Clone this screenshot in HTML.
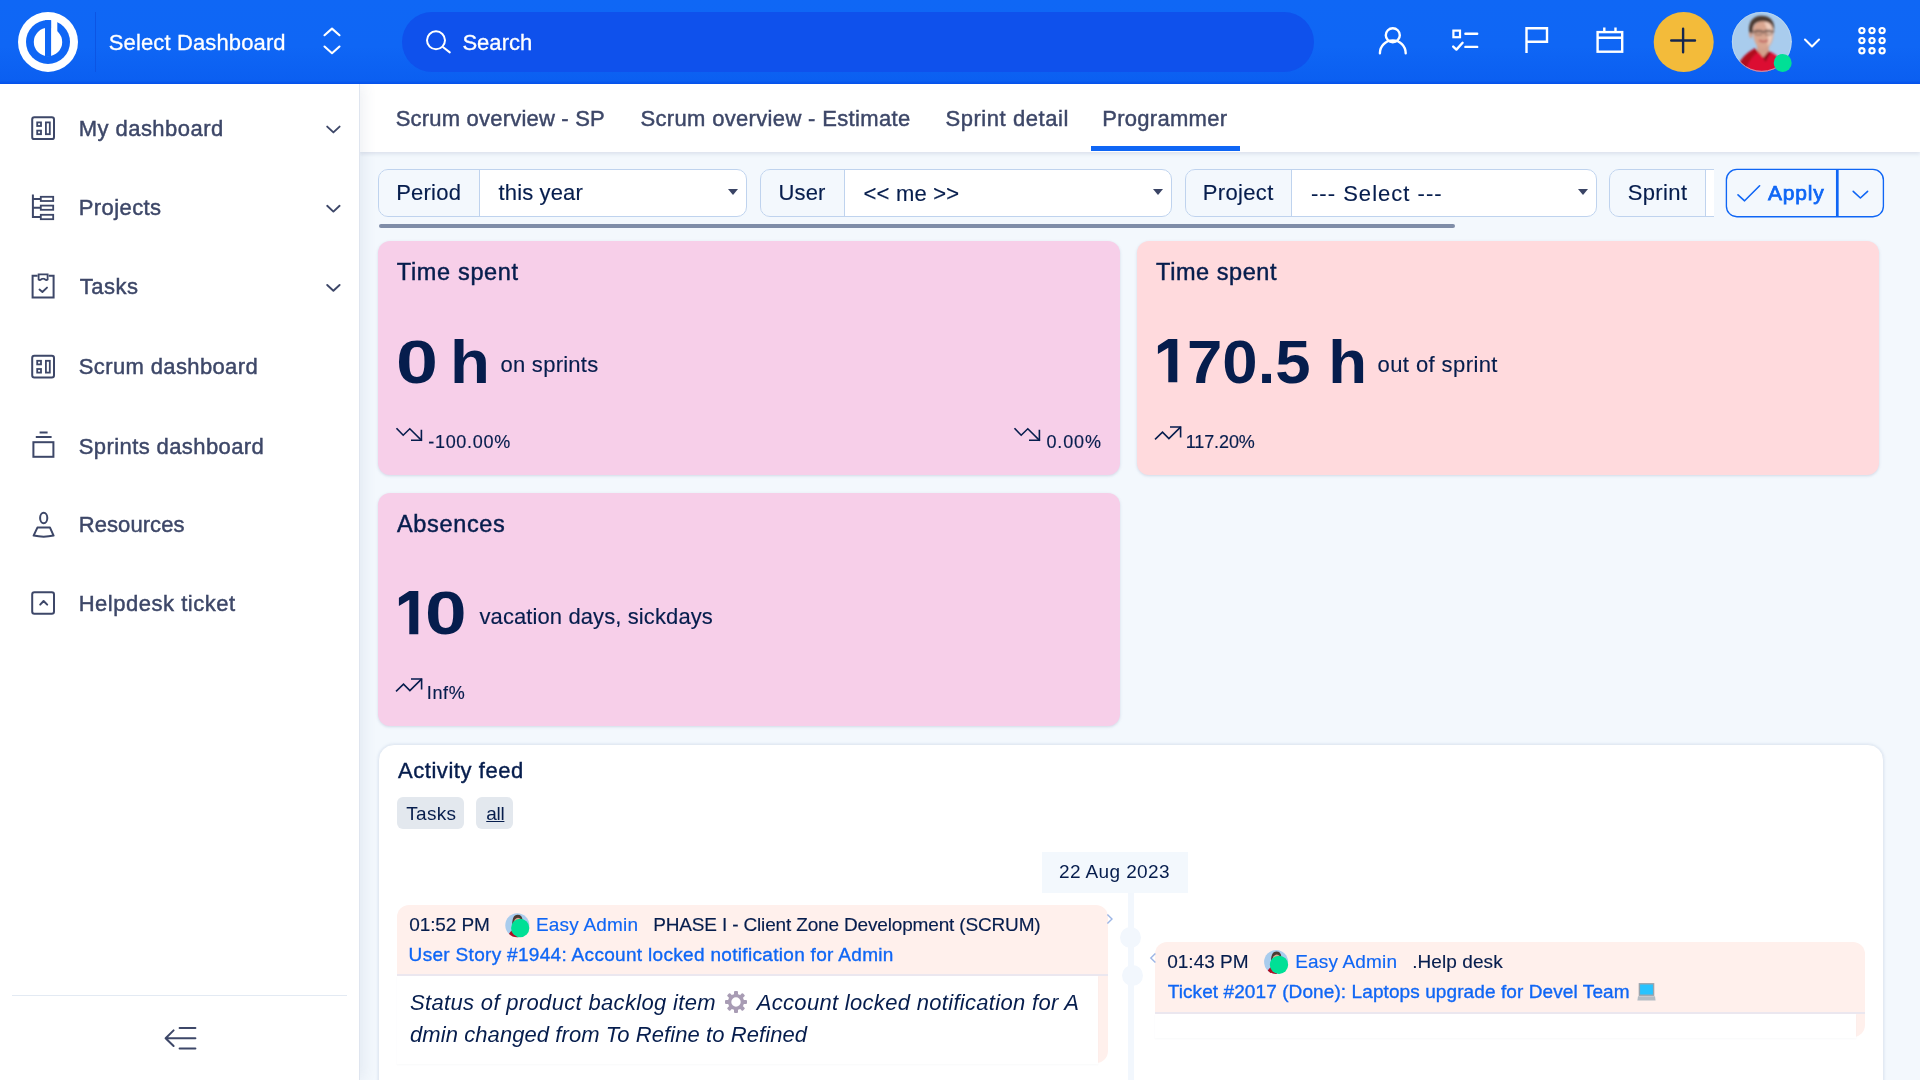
<!DOCTYPE html>
<html lang="en">
<head>
<meta charset="utf-8">
<title>Programmer - Dashboard</title>
<style>
*{box-sizing:border-box;margin:0;padding:0}
html,body{width:1920px;height:1080px;overflow:hidden}
body{position:relative;background:#f3f8fd;font-family:"Liberation Sans",sans-serif;color:#061d4d;}
.abs{position:absolute}
.t{position:absolute;white-space:nowrap;line-height:1;transform-origin:0 0}
svg{position:absolute;overflow:visible}
/* header */
#hdr{left:0;top:0;width:1920px;height:84px;background:linear-gradient(#0f67f5 0,#0f66f5 55%,#0b5ff1 96%,#0450ea 100%)}
#hdr .sep{left:95px;top:12px;width:1px;height:60px;background:#0c55e4}
#search{left:402px;top:12px;width:912px;height:60px;border-radius:30px;background:#0f51ec}
.hw{color:#fff;font-size:22px;-webkit-text-stroke:.3px #fff}
/* sidebar */
#side{left:0;top:84px;width:360px;height:996px;background:#fff;border-right:1px solid #dfe5ef;box-shadow:3px 0 14px rgba(60,80,120,.09)}
.mi{color:#3d4768;font-size:22px;font-weight:400;-webkit-text-stroke:.45px #3d4768}
/* tabs */
#tabs{left:360px;top:84px;width:1560px;height:68px;background:#fff;box-shadow:0 2px 4px rgba(60,80,120,.13)}
.tab{color:#3d4768;font-size:22px;-webkit-text-stroke:.45px #3d4768}
/* filters */
.fg{top:169px;height:48px;border:1px solid #bfd3ee;border-radius:10px;background:#fff;overflow:hidden}
.fl{position:absolute;left:-1px;top:-1px;height:48px;background:#f3f8fd;border:1px solid #bfd3ee;border-radius:10px 0 0 10px}
.ft{font-size:22px;color:#061d4d;-webkit-text-stroke:.15px #061d4d}
.car{width:0;height:0;border-left:5.75px solid transparent;border-right:5.75px solid transparent;border-top:6.5px solid #3a4465}
/* cards */
.card{border-radius:12px;box-shadow:0 1px 3px rgba(90,110,150,.22)}
.ct{font-size:23.5px;color:#061d4d;-webkit-text-stroke:.45px #061d4d}
.big{font-size:61px;font-weight:700;color:#061d4d}
.sub{font-size:22px;color:#061d4d;-webkit-text-stroke:.15px #061d4d}
.pc{font-size:18px;color:#061d4d;-webkit-text-stroke:.15px #061d4d}
/* feed */
.tag{height:32px;border-radius:6px;background:#e3e8ee}
.fd{font-size:19px;color:#061d4d;-webkit-text-stroke:.15px currentColor}
.lk{color:#0f66f5}
.b{-webkit-text-stroke:.35px #0f66f5}
.it{font-size:22px;font-style:italic;color:#061d4d}
</style>
</head>
<body>
<div id="wrap" style="position:absolute;left:0;top:0;width:1920px;height:1080px;overflow:hidden;will-change:transform">
<!-- MAIN CONTENT PLACEHOLDER -->
<div id="main">
<!-- FILTERS -->
<div class="abs fg" style="left:378px;width:369px"><div class="fl" style="width:102px"></div></div>
<div class="abs fg" style="left:760px;width:412px"><div class="fl" style="width:85px"></div></div>
<div class="abs fg" style="left:1185px;width:412px"><div class="fl" style="width:107px"></div></div>
<div class="abs fg" style="left:1609px;width:130px;clip-path:inset(0 25px 0 0)"><div class="fl" style="width:97px"></div></div>
<div class="t ft" style="left:396.14px;top:182.30px;letter-spacing:0.252px">Period</div>
<div class="t ft" style="left:498.62px;top:182.30px;letter-spacing:0.125px">this year</div>
<div class="t ft" style="left:778.47px;top:182.30px;letter-spacing:0.151px">User</div>
<div class="t ft" style="left:863.54px;top:182.61px;letter-spacing:0.196px">&lt;&lt; me &gt;&gt;</div>
<div class="t ft" style="left:1202.73px;top:182.30px;letter-spacing:0.344px">Project</div>
<div class="t ft" style="left:1311.00px;top:182.61px;letter-spacing:1.021px">--- Select ---</div>
<div class="t ft" style="left:1627.65px;top:182.30px;letter-spacing:0.390px">Sprint</div>
<div class="abs car" style="left:728px;top:189px"></div>
<div class="abs car" style="left:1152.6px;top:189px"></div>
<div class="abs car" style="left:1577.6px;top:189px"></div>
<svg width="160" height="50" viewBox="1725 168 160 50" style="left:1725px;top:168px" fill="none" stroke="#0f66f5" stroke-width="1.6" stroke-linecap="round" stroke-linejoin="round">
  <rect x="1726.4" y="169.4" width="157" height="47.3" rx="10.5" stroke-width="1.35" fill="#f3f8fd"/>
  <path d="M1837.3 169.4 V216.7" stroke-width="2.7" stroke-linecap="butt"/>
  <path d="M1738 194.8 L1744.6 200.8 L1759.6 185.8"/>
  <path d="M1853.2 191.3 L1860.4 198 L1867.6 191.3"/>
</svg>
<div class="t" style="left:1767.96px;top:182.21px;font-size:21px;font-weight:400;-webkit-text-stroke:.75px #0f66f5;color:#0f66f5;letter-spacing:0.805px">Apply</div>
<div class="abs" style="left:379px;top:224px;width:1076px;height:4px;border-radius:2px;background:#7f8da8"></div>

<!-- CARDS -->
<div class="abs card" style="left:378px;top:241px;width:742px;height:234px;background:#f7cfe9"></div>
<div class="abs card" style="left:1137px;top:241px;width:742px;height:234px;background:#ffdadd"></div>
<div class="abs card" style="left:378px;top:493px;width:742px;height:233px;background:#f7cfe9"></div>
<div class="t ct" style="left:396.86px;top:261.30px;letter-spacing:0.651px">Time spent</div>
<div class="t ct" style="left:1156.12px;top:261.30px;letter-spacing:0.548px">Time spent</div>
<div class="t ct" style="left:396.88px;top:513.30px;letter-spacing:0.679px">Absences</div>
<div class="t big" style="left:395.81px;top:331.61px;transform:scaleX(1.2367)">0</div>
<div class="t big" style="left:449.63px;top:331.61px;transform:scaleX(1.0716)">h</div>
<div class="t big" style="left:1186.71px;top:331.61px;transform:scaleX(1.0411)">70.5 h</div>
<div class="t big" style="left:424.81px;top:583.41px;transform:scaleX(1.2261)">0</div>
<div class="t sub" style="left:500.51px;top:354.21px;letter-spacing:0.263px">on sprints</div>
<div class="t sub" style="left:1377.55px;top:354.00px;letter-spacing:0.415px">out of sprint</div>
<div class="t sub" style="left:479.45px;top:606.00px;letter-spacing:0.104px">vacation days, sickdays</div>
<div class="t pc" style="left:428.16px;top:432.50px;letter-spacing:0.733px">-100.00%</div>
<div class="t pc" style="left:1046.41px;top:432.50px;letter-spacing:0.893px">0.00%</div>
<div class="t pc" style="left:1185.78px;top:432.50px;letter-spacing:-0.114px">117.20%</div>
<div class="t pc" style="left:426.70px;top:684.21px;letter-spacing:0.701px">Inf%</div>
<svg width="1920" height="300" viewBox="0 420 1920 300" style="left:0;top:420px" fill="none" stroke="#061d4d" stroke-width="1.6" stroke-linecap="square" stroke-linejoin="miter">
  <g id="tdn"><path d="M397 428.8 L403.2 435.2 L409.8 428.8 L421.2 440"/><path d="M411.8 440.2 H421.4 V430.6"/></g>
  <use href="#tdn" x="618"/>
  <g id="tup"><path d="M1155.6 438.8 L1162.5 432.2 L1168.9 438.6 L1180.2 427.4"/><path d="M1170.8 427 H1180.6 V436.8"/></g>
  <use href="#tup" x="-759" y="252"/>
</svg>

<svg width="1920" height="400" viewBox="0 300 1920 400" style="left:0;top:300px" fill="#061d4d" stroke="none">
  <path id="one" d="M398.9 597.8 L409.3 591 H418.3 V634.3 H409.3 V599.7 L398.9 605.9 Z"/>
  <use href="#one" x="759" y="-252"/>
</svg>

<!-- ACTIVITY FEED -->
<div class="abs" style="left:378px;top:744px;width:1506px;height:360px;background:#fff;border:1px solid #e3eaf3;border-radius:16px;box-shadow:0 0 3px rgba(90,120,170,.18)"></div>
<div class="t" style="left:397.97px;top:759.61px;font-size:22px;-webkit-text-stroke:.4px #061d4d;letter-spacing:0.554px">Activity feed</div>
<div class="abs tag" style="left:397px;top:797px;width:67px"></div>
<div class="abs tag" style="left:476px;top:797px;width:37px"></div>
<div class="t" style="left:406.36px;top:803.91px;font-size:19px;letter-spacing:0.244px">Tasks</div>
<div class="t" style="left:486.25px;top:803.91px;font-size:19px;text-decoration:underline;letter-spacing:-0.288px">all</div>
<div class="abs" style="left:1128px;top:892px;width:6px;height:200px;background:#f2f7fd"></div>
<div class="abs" style="left:1042px;top:852px;width:146px;height:41px;background:#f3f8fd"></div>
<div class="t" style="left:1059.00px;top:862.25px;font-size:19px;letter-spacing:0.383px">22 Aug 2023</div>
<div class="abs" style="left:1120px;top:927px;width:21px;height:21px;border-radius:50%;background:#f2f7fd"></div>
<div class="abs" style="left:1122px;top:964.5px;width:21px;height:21px;border-radius:50%;background:#f2f7fd"></div>
<!-- left item -->
<div class="abs" style="left:397px;top:905px;width:711px;height:158px;background:#fff0ec;border-radius:12px 12px 12px 0"></div>
<div class="abs" style="left:397px;top:974px;width:711px;height:2px;background:#ebe7ef"></div>
<div class="abs" style="left:397px;top:976px;width:701px;height:88px;background:#fff;box-shadow:0 1px 2px rgba(60,80,120,.035)"></div>
<div class="t fd" style="left:409.22px;top:915.21px;letter-spacing:-0.095px">01:52 PM</div>
<div class="t fd lk" style="left:535.91px;top:914.80px;letter-spacing:0.205px">Easy Admin</div>
<div class="t fd" style="left:653.21px;top:915.41px;letter-spacing:-0.160px">PHASE I - Client Zone Development (SCRUM)</div>
<div class="t fd lk b" style="left:408.61px;top:945.30px;letter-spacing:0.313px">User Story #1944: Account locked notification for Admin</div>
<div class="t it" style="left:410.00px;top:992.41px;letter-spacing:0.333px">Status of product backlog item</div>
<div class="t it" style="left:756.75px;top:992.41px;letter-spacing:0.308px">Account locked notification for A</div>
<div class="t it" style="left:409.99px;top:1023.50px;letter-spacing:0.078px">dmin changed from To Refine to Refined</div>
<!-- right item -->
<div class="abs" style="left:1155px;top:942px;width:710px;height:95px;background:#fff0ec;border-radius:12px 12px 12px 0"></div>
<div class="abs" style="left:1155px;top:1011.5px;width:710px;height:2px;background:#ebe7ef"></div>
<div class="abs" style="left:1155px;top:1013.5px;width:700.5px;height:24px;background:#fff;box-shadow:0 1px 2px rgba(60,80,120,.035)"></div>
<div class="t fd" style="left:1167.16px;top:952.00px;letter-spacing:0.019px">01:43 PM</div>
<div class="t fd lk" style="left:1295.31px;top:951.61px;letter-spacing:0.149px">Easy Admin</div>
<div class="t fd" style="left:1412.23px;top:952.00px;letter-spacing:0.077px">.Help desk</div>
<div class="t fd lk b" style="left:1167.66px;top:982.00px;letter-spacing:0.091px">Ticket #2017 (Done): Laptops upgrade for Devel Team</div>
<svg width="1920" height="200" viewBox="0 880 1920 200" style="left:0;top:880px" fill="none" stroke="none">
  <!-- small avatars -->
  <clipPath id="savc"><circle cx="517.3" cy="925.2" r="12"/></clipPath>
  <g id="sav"><g clip-path="url(#savc)"><rect x="504" y="912" width="27" height="27" fill="#a9cced"/><g filter="url(#avb2)"><path d="M512.4 927 C511.6 919 513.6 915 517.6 914.8 C520.6 914.8 522.2 916.6 522.6 920 L512.8 928Z" fill="#4b3a33"/><ellipse cx="518" cy="923.6" rx="4.4" ry="5.8" fill="#dfa48f"/><path d="M507 940 C508 933 511 930.6 514 929.4 L520 940Z" fill="#b00a22"/></g></g><circle cx="520.2" cy="928" r="9.15" fill="#00e096"/></g>
  <filter id="avb2" x="-20%" y="-20%" width="140%" height="140%"><feGaussianBlur stdDeviation="0.45"/></filter>
  <use href="#sav" x="758.8" y="36.8"/>
  <!-- arrows -->
  <path d="M1107.4 914.4 L1112 919 L1107.4 923.6" stroke="#9db6e6" stroke-width="1.4"/>
  <path d="M1155.4 953.4 L1150.8 958 L1155.4 962.6" stroke="#9db6e6" stroke-width="1.4"/>
  <!-- gear -->
  <g transform="translate(736,1002)" fill="#a89cb4"><circle r="6.4" fill="none" stroke="#a89cb4" stroke-width="3.4"/><g id="gt"><rect x="-2" y="-11" width="4" height="5" rx="1"/><rect x="-2" y="6" width="4" height="5" rx="1"/></g><use href="#gt" transform="rotate(45)"/><use href="#gt" transform="rotate(90)"/><use href="#gt" transform="rotate(135)"/></g>
  <!-- laptop -->
  <g><rect x="1639.4" y="983.8" width="14.2" height="11.4" fill="#29c3ff" stroke="#9aa4ad" stroke-width="1.4"/><path d="M1638 996.2 H1655 L1655.6 1000.4 H1637.4 Z" fill="#b4bcc4"/></g>
</svg>
</div>

<!-- TABS -->
<div id="tabs" class="abs"></div>
<div class="t tab" style="left:395.65px;top:108.00px;letter-spacing:0.206px">Scrum overview - SP</div>
<div class="t tab" style="left:640.45px;top:108.00px;letter-spacing:0.337px">Scrum overview - Estimate</div>
<div class="t tab" style="left:945.45px;top:108.00px;letter-spacing:0.563px">Sprint detail</div>
<div class="t tab" style="left:1102.22px;top:108.00px;letter-spacing:0.291px">Programmer</div>
<div class="abs" style="left:1091px;top:146px;width:149px;height:5px;background:#0f66f5"></div>

<!-- SIDEBAR -->
<div id="side" class="abs"></div>
<div class="t mi" style="left:78.71px;top:117.75px;letter-spacing:0.458px">My dashboard</div>
<div class="t mi" style="left:78.71px;top:196.50px;letter-spacing:0.416px">Projects</div>
<div class="t mi" style="left:79.66px;top:276.11px;letter-spacing:0.511px">Tasks</div>
<div class="t mi" style="left:78.80px;top:356.11px;letter-spacing:0.372px">Scrum dashboard</div>
<div class="t mi" style="left:78.80px;top:435.50px;letter-spacing:0.400px">Sprints dashboard</div>
<div class="t mi" style="left:78.71px;top:513.75px;letter-spacing:0.083px">Resources</div>
<div class="t mi" style="left:78.71px;top:592.61px;letter-spacing:0.514px">Helpdesk ticket</div>
<div class="abs" style="left:12px;top:995px;width:335px;height:1px;background:#e3eaf3"></div>
<svg id="sicons" width="360" height="1080" viewBox="0 0 360 1080" style="left:0;top:0" fill="none" stroke="#3d4768" stroke-width="2" stroke-linecap="round" stroke-linejoin="round">
  <!-- my dashboard -->
  <g id="dash">
    <rect x="32.2" y="117.3" width="21.8" height="21.8" rx="2.2"/>
    <rect x="37.2" y="122.4" width="3.8" height="3.6" stroke-linejoin="miter" stroke-width="1.8"/>
    <rect x="37.2" y="130.6" width="3.8" height="3.6" stroke-linejoin="miter" stroke-width="1.8"/>
    <rect x="45.9" y="122.4" width="3.9" height="11.8" stroke-linejoin="miter" stroke-width="1.8"/>
  </g>
  <use href="#dash" y="238.4"/>
  <!-- projects -->
  <path d="M32.9 194.4 V217 H40.8 M32.9 199 H40.8 M32.9 207.7 H40.8" stroke-linecap="butt" stroke-linejoin="miter"/>
  <rect x="40.8" y="196.8" width="12.4" height="4.2" stroke-linejoin="miter" stroke-width="1.8"/>
  <rect x="40.8" y="205.6" width="12.4" height="4.2" stroke-linejoin="miter" stroke-width="1.8"/>
  <rect x="40.8" y="214.8" width="12.4" height="4.4" stroke-linejoin="miter" stroke-width="1.8"/>
  <!-- tasks -->
  <path d="M37.6 275.8 H32.6 V297.6 H53.6 V275.8 H48.6" stroke-linejoin="miter" stroke-linecap="butt"/>
  <path d="M38.6 279.6 V274.4 H47.6 V279.6 C45.6 281.2 44.6 278.2 43.1 278.6 C41.6 278.2 40.6 281.2 38.6 279.6 Z" stroke-width="1.8" stroke-linejoin="miter"/>
  <path d="M39.5 289.6 L42.4 292 L47 287.6" stroke-width="1.9"/>
  <!-- sprints -->
  <path d="M39.6 432.4 H47.6 M35.8 436.9 H51.6" stroke-linecap="butt"/>
  <rect x="33.4" y="442.2" width="20" height="14.6" stroke-linejoin="miter"/>
  <!-- resources -->
  <ellipse cx="43.7" cy="518" rx="3.6" ry="5.2"/>
  <path d="M37.4 527.6 H50 L53.6 535.6 Q43.7 537.8 33.6 535.6 Z"/>
  <!-- helpdesk -->
  <rect x="32.2" y="592.2" width="21.8" height="21.6" rx="2.2"/>
  <path d="M40.2 604.6 L43.6 601 L47.2 604.6"/>
  <!-- chevrons -->
  <g stroke-width="1.9"><path d="M327.2 126.6 L333.4 132.4 L339.6 126.6"/><path d="M327.2 205.8 L333.4 211.6 L339.6 205.8"/><path d="M327.2 285 L333.4 290.8 L339.6 285"/></g>
  <!-- collapse -->
  <path d="M179.6 1028 H195.4 M166 1038.2 H195.4 M179.6 1048.4 H195.4 M173.6 1030.4 L165.6 1038.2 L173.6 1046" stroke-width="2"/>
</svg>

<!-- HEADER -->
<div id="hdr" class="abs">
  <div class="abs sep"></div>
  <div id="search" class="abs"></div>
</div>
<svg id="hicons" width="1920" height="84" viewBox="0 0 1920 84" style="left:0;top:0" fill="none" stroke="#fff" stroke-width="2.4" stroke-linecap="round" stroke-linejoin="round">
  <!-- logo -->
  <circle cx="48" cy="41.9" r="30" fill="#fff" stroke="none"/>
  <circle cx="48" cy="42" r="22" fill="#0f66f5" stroke="none"/>
  <circle cx="48" cy="42" r="14.2" fill="#fff" stroke="none"/>
  <rect x="51.1" y="17" width="6.2" height="25" fill="#fff" stroke="none"/>
  <rect x="45" y="20.2" width="6.1" height="36.6" fill="#0f66f5" stroke="none"/>
  <!-- up/down chevrons -->
  <path d="M324.5 35.2 L332 28.6 L339.5 35.2 M324.5 46.5 L332 53.2 L339.5 46.5" stroke-width="2.1"/>
  <!-- search icon -->
  <circle cx="436" cy="40.3" r="9" stroke-width="2"/>
  <path d="M443.2 47.2 L449.8 52.4" stroke-width="2"/>
  <!-- user -->
  <circle cx="1392.8" cy="35.2" r="7"/>
  <path d="M1379.9 53.2 A12.9 12.9 0 0 1 1405.7 53.2"/>
  <!-- tasks list -->
  <rect x="1453.4" y="30.6" width="6.6" height="6.6" stroke-linejoin="miter" stroke-width="2.2"/>
  <path d="M1465.4 33.7 H1477.2 M1465.4 46.9 H1477.2"/>
  <path d="M1453.2 46.6 L1456.4 49.6 L1462.6 42.8"/>
  <!-- flag -->
  <path d="M1526.5 53 V28.2 H1547 V41.8 H1526.5" stroke-linejoin="miter" stroke-linecap="butt"/>
  <!-- calendar -->
  <rect x="1597.6" y="32.1" width="24.6" height="19.6" stroke-linejoin="miter"/>
  <path d="M1597.6 37.7 H1622.2 M1604.3 27.6 V32 M1615.5 27.6 V32" stroke-linecap="butt"/>
  <!-- plus button -->
  <circle cx="1683.7" cy="42" r="30" fill="#f3bb3a" stroke="none"/>
  <path d="M1671.2 40.5 H1695 M1683.1 28.7 V52.3" stroke="#15264f" stroke-width="2.4"/>
  <!-- avatar -->
  <clipPath id="avc"><circle cx="1761.8" cy="41.8" r="29.9"/></clipPath>
  <filter id="avb" x="-10%" y="-10%" width="120%" height="120%"><feGaussianBlur stdDeviation="0.9"/></filter>
  <g clip-path="url(#avc)" stroke="none">
    <rect x="1728" y="8" width="68" height="68" fill="#a9cced"/>
    <g filter="url(#avb)">
      <path d="M1749.4 33.5 C1747.6 24 1751.5 16.6 1760.5 15.8 C1768.5 15.2 1773.8 19.6 1774.2 27 L1773.6 32 C1771.5 23.5 1765 21 1757.5 22.4 C1753.2 23.4 1752.6 28 1752.6 34 Z" fill="#4b3a33"/>
      <path d="M1753 33.4 C1752.2 25.6 1755.4 21.4 1762.6 21.2 C1770 21 1773.6 25.6 1773.6 32.4 C1773.6 41 1769.6 48.6 1763.6 49 C1757.6 49.2 1753.8 42 1753 33.4 Z" fill="#d9a690"/>
      <path d="M1764 22 C1770 22 1772.8 26 1772.8 31.6 C1772.8 38 1770.8 43.6 1767.6 46.6 C1768.6 38 1768 28 1764 22Z" fill="#efcdbd"/>
      <path d="M1749.2 32.4 C1748.6 34.6 1749.6 38 1751.6 38.6 L1752.6 33.4Z" fill="#d29c88"/>
      <path d="M1753 31.6 H1773.6" stroke="#6d544b" stroke-width="1.5" fill="none"/>
      <rect x="1755" y="30.2" width="7.4" height="4.6" rx="1.4" fill="none" stroke="#7d6259" stroke-width="1"/>
      <rect x="1764.6" y="30.2" width="7.4" height="4.6" rx="1.4" fill="none" stroke="#7d6259" stroke-width="1"/>
      <path d="M1759.6 40.6 Q1763.4 42.8 1767.4 40.4" stroke="#c0605e" stroke-width="1.7" fill="none"/>
      <path d="M1756.8 45 L1757.6 52 L1764 58 L1769 52 L1768.6 45 C1765.6 49.6 1760 49.6 1756.8 45Z" fill="#d3a08c"/>
      <path d="M1738 66 C1741 58 1746.4 53.4 1754.8 48.2 L1760.6 54.2 L1763.4 57.6 L1768.8 51.2 C1773 52.6 1776 55 1779 58 L1792 70 L1790 78 H1736 Z" fill="#dc0a33"/>
      <path d="M1738 66 C1741 58 1746.4 53.4 1754.8 48.2 L1758 52 C1750 58 1746 66 1745 76 H1736Z" fill="#b0081f"/>
      <path d="M1763.4 57.6 L1768.8 51.2 L1770.6 53 L1765.4 62 Z" fill="#8c0c1c"/>
    </g>
  </g>
  <circle cx="1761.8" cy="41.8" r="29.5" fill="none" stroke="#c5ddf4" stroke-width=".8" opacity=".8"/>
  <circle cx="1782.7" cy="62.9" r="9" fill="#00e096" stroke="none"/>
  <!-- chevron -->
  <path d="M1805 39.6 L1812 46.4 L1819 39.6" stroke-width="2.1"/>
  <!-- app grid -->
  <g stroke-width="2.2">
    <circle cx="1861.9" cy="30.6" r="2.6"/><circle cx="1872" cy="30.6" r="2.6"/><circle cx="1882.1" cy="30.6" r="2.6"/>
    <circle cx="1861.9" cy="40.6" r="2.6"/><circle cx="1872" cy="40.6" r="2.6"/><circle cx="1882.1" cy="40.6" r="2.6"/>
    <circle cx="1861.9" cy="50.7" r="2.6"/><circle cx="1872" cy="50.7" r="2.6"/><circle cx="1882.1" cy="50.7" r="2.6"/>
  </g>
</svg>
<div class="t hw" style="left:108.76px;top:32.00px;letter-spacing:0.130px">Select Dashboard</div>
<div class="t hw" style="left:462.43px;top:32.00px;letter-spacing:0.020px">Search</div>

</div>
</body>
</html>
